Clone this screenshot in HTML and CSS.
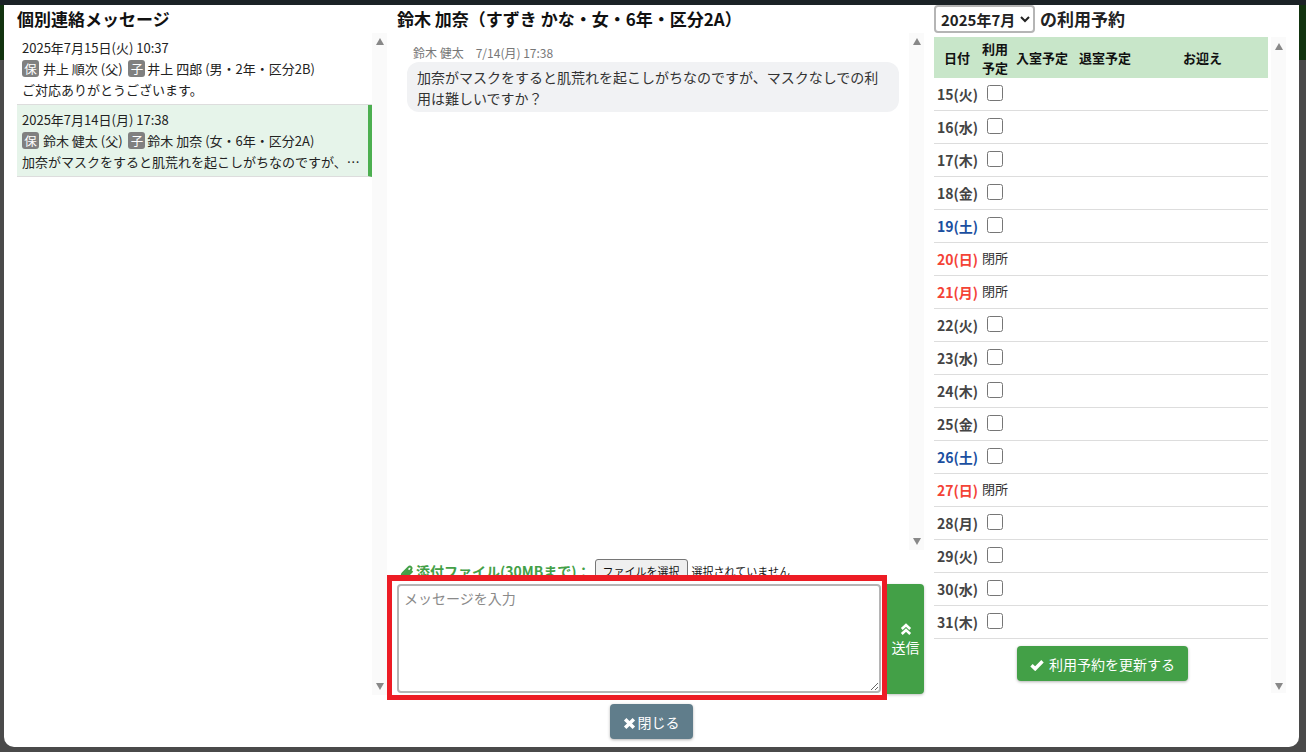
FILE: index.html
```html
<!DOCTYPE html>
<html lang="ja">
<head>
    <meta charset="UTF-8">
    <title>個別連絡メッセージ</title>
    <link rel="stylesheet" href="styles.css">
</head>
<body>
<div class="page-header"></div>

<div class="modal">
    <div class="modal-columns">
        <section class="col-list">
            <h2 class="col-title">個別連絡メッセージ</h2>
            <div class="scroll-pane list-pane">
                <div class="scroll-body">
                    <div class="thread">
                        <div>2025年7月15日(火) 10:37</div>
                        <div><span class="badge">保</span> 井上 順次 (父) <span class="badge badge-child">子</span> 井上 四郎 (男・2年・区分2B)</div>
                        <div class="thread-last">ご対応ありがとうございます。</div>
                    </div>
                    <div class="thread active">
                        <div>2025年7月14日(月) 17:38</div>
                        <div><span class="badge">保</span> 鈴木 健太 (父) <span class="badge badge-child">子</span> 鈴木 加奈 (女・6年・区分2A)</div>
                        <div class="thread-last">加奈がマスクをすると肌荒れを起こしがちなのですが、マスクなしでの利用は難しいですか？</div>
                    </div>
                </div>
                <div class="scrollbar"><i class="arrow-up"></i><i class="arrow-down"></i></div>
            </div>
        </section>

        <section class="col-chat">
            <h2 class="col-title chat-title">鈴木 加奈（すずき かな・女・6年・区分2A）</h2>
            <div class="scroll-pane chat-pane">
                <div class="scroll-body chat-body">
                    <div class="msg-meta">鈴木 健太<span class="msg-time">7/14(月) 17:38</span></div>
                    <div class="msg-bubble">加奈がマスクをすると肌荒れを起こしがちなのですが、マスクなしでの利用は難しいですか？</div>
                </div>
                <div class="scrollbar"><i class="arrow-up"></i><i class="arrow-down"></i></div>
            </div>
            <div class="attach-row">
                <span class="attach-label">
                    <svg class="icon-clip" viewBox="0 0 14 14"><path d="M12.500 6 6.800 11.700c-1.300 1.300-3.200 1.400-4.300.4s-1-2.900.3-4.200l5.500-5.500c.9-.9 2.100-1 2.800-.3s.6 1.900-.3 2.800L5.400 10.300c-.4.4-1 .5-1.300.2s-.2-.9.2-1.300l4.400-4.400" fill="none" stroke="currentColor" stroke-width="2"/></svg>添付ファイル(30MBまで)：
                </span>
                <button class="file-button" type="button">ファイルを選択</button>
                <span class="file-name">選択されていません</span>
            </div>
            <div class="compose-row">
                <div class="highlight">
                    <textarea class="message-input" placeholder="メッセージを入力"></textarea>
                </div>
                <button class="send-button" type="button">
                    <svg class="icon-send" viewBox="0 0 12 12"><path d="M1.800 6 6 2 10.200 6M1.800 11 6 7 10.200 11" fill="none" stroke="currentColor" stroke-width="2.600"/></svg>
                    送信
                </button>
            </div>
            <div class="close-row">
                <button class="close-button" type="button">
                    <svg class="icon-close" viewBox="0 0 12 12"><path d="M2 2 10 10M10 2 2 10" fill="none" stroke="currentColor" stroke-width="3.200"/></svg>閉じる
                </button>
            </div>
        </section>

        <section class="col-reserve">
            <div class="reserve-title">
                <select class="month-select"><option>2025年7月</option></select>
                <span class="reserve-label">の利用予約</span>
            </div>
            <div class="scroll-pane reserve-pane">
                <div class="scroll-body reserve-body">
                    <table class="reserve-table">
                        <thead>
                            <tr>
                                <th class="c-date">日付</th>
                                <th class="c-check">利用<br>予定</th>
                                <th class="c-in">入室予定</th>
                                <th class="c-out">退室予定</th>
                                <th class="c-pick">お迎え</th>
                            </tr>
                        </thead>
                        <tbody>
                            <tr><td class="day">15(火)</td><td><input type="checkbox"></td><td></td><td></td><td></td></tr>
                            <tr><td class="day">16(水)</td><td><input type="checkbox"></td><td></td><td></td><td></td></tr>
                            <tr><td class="day">17(木)</td><td><input type="checkbox"></td><td></td><td></td><td></td></tr>
                            <tr><td class="day">18(金)</td><td><input type="checkbox"></td><td></td><td></td><td></td></tr>
                            <tr><td class="day sat">19(土)</td><td><input type="checkbox"></td><td></td><td></td><td></td></tr>
                            <tr><td class="day sun">20(日)</td><td class="closed">閉所</td><td></td><td></td><td></td></tr>
                            <tr><td class="day sun">21(月)</td><td class="closed">閉所</td><td></td><td></td><td></td></tr>
                            <tr><td class="day">22(火)</td><td><input type="checkbox"></td><td></td><td></td><td></td></tr>
                            <tr><td class="day">23(水)</td><td><input type="checkbox"></td><td></td><td></td><td></td></tr>
                            <tr><td class="day">24(木)</td><td><input type="checkbox"></td><td></td><td></td><td></td></tr>
                            <tr><td class="day">25(金)</td><td><input type="checkbox"></td><td></td><td></td><td></td></tr>
                            <tr><td class="day sat">26(土)</td><td><input type="checkbox"></td><td></td><td></td><td></td></tr>
                            <tr><td class="day sun">27(日)</td><td class="closed">閉所</td><td></td><td></td><td></td></tr>
                            <tr><td class="day">28(月)</td><td><input type="checkbox"></td><td></td><td></td><td></td></tr>
                            <tr><td class="day">29(火)</td><td><input type="checkbox"></td><td></td><td></td><td></td></tr>
                            <tr><td class="day">30(水)</td><td><input type="checkbox"></td><td></td><td></td><td></td></tr>
                            <tr><td class="day">31(木)</td><td><input type="checkbox"></td><td></td><td></td><td></td></tr>
                        </tbody>
                    </table>
                    <div class="update-row">
                        <button class="update-button" type="button">
                            <svg class="icon-check" viewBox="0 0 14 12"><path d="M1.500 6.200 5.200 9.800 12.500 2.200" fill="none" stroke="currentColor" stroke-width="3.400"/></svg>利用予約を更新する
                        </button>
                    </div>
                </div>
                <div class="scrollbar"><i class="arrow-up"></i><i class="arrow-down"></i></div>
            </div>
        </section>
    </div>
</div>
</body>
</html>
```

FILE: styles.css
```css
* {
    margin: 0;
    padding: 0;
    box-sizing: border-box;
}

html, body {
    height: 100%;
}

body {
    font-family: "Noto Sans CJK JP", "Noto Sans", sans-serif;
    background: #4a4a4a;
    color: #222;
    overflow: hidden;
}

.page-header {
    height: 60px;
    background: #12330f;
    border-top: 5px solid #1b2226;
}

.modal {
    position: absolute;
    left: 4px;
    top: 5px;
    width: 1295px;
    height: 742px;
    background: white;
    border-radius: 0 0 10px 10px;
    padding-left: 13px;
}

.modal-columns {
    display: flex;
    height: 100%;
}

.col-title {
    font-size: 17px;
    font-weight: bold;
    color: #111;
    line-height: 28px;
}

/* scroll panes */
.scroll-pane {
    display: flex;
}

.scroll-body {
    flex: 1;
    min-width: 0;
}

.scrollbar {
    width: 15px;
    background: #fafafa;
    display: flex;
    flex-direction: column;
    justify-content: space-between;
    align-items: center;
    padding: 5px 0;
}

.arrow-up,
.arrow-down {
    width: 0;
    height: 0;
    border-left: 4.500px solid transparent;
    border-right: 4.500px solid transparent;
}

.arrow-up {
    border-bottom: 7px solid #888;
}

.arrow-down {
    border-top: 7px solid #888;
}

/* left column */
.col-list {
    width: 370px;
    flex-shrink: 0;
}

.list-pane {
    height: 662px;
}

.thread {
    height: 72px;
    padding: 4px 5px 0;
    font-size: 13px;
    line-height: 21px;
    color: #222;
    border-bottom: 1px solid #ddd;
}

.thread.active {
    background: #e6f4ea;
    border-right: 4px solid #4caf50;
}

.thread-last {
    white-space: nowrap;
    overflow: hidden;
    text-overflow: ellipsis;
}

.badge {
    display: inline-block;
    width: 17px;
    height: 17px;
    line-height: 17px;
    margin-right: 1px;
    text-align: center;
    background: #808080;
    color: white;
    font-size: 12.500px;
    border-radius: 3px;
}

.badge-child {
    margin-left: 3px;
    margin-right: -1px;
}

/* middle column */
.col-chat {
    width: 537px;
    flex-shrink: 0;
}

.chat-title {
    padding-left: 10px;
}

.chat-pane {
    height: 517px;
}

.chat-body {
    padding: 11px 10px 0 20px;
}

.msg-meta {
    font-size: 12px;
    line-height: 18px;
    color: #777;
    padding-left: 6px;
}

.msg-time {
    margin-left: 12px;
}

.msg-bubble {
    background: #f1f2f4;
    border-radius: 12px;
    padding: 5px 10px 3px;
    font-size: 14px;
    line-height: 21px;
    color: #333;
}

.attach-row {
    display: flex;
    align-items: flex-start;
    height: 24px;
    margin-top: 9px;
    padding-left: 13px;
    overflow: hidden;
}

.attach-label {
    font-size: 14px;
    font-weight: bold;
    color: #43a047;
    line-height: 24px;
    margin-right: 4px;
}

.icon-clip {
    width: 14px;
    height: 14px;
    margin-right: 2px;
    vertical-align: -2px;
}

.file-button {
    font-family: inherit;
    font-size: 11px;
    height: 24px;
    width: 93px;
    background: #efefef;
    border: 1px solid #767676;
    border-radius: 3px;
    color: #111;
}

.file-name {
    font-size: 11px;
    line-height: 24px;
    margin-left: 4px;
    color: #111;
}

.compose-row {
    display: flex;
    margin-top: -8px;
}

.highlight {
    width: 500px;
    height: 125px;
    border: 5px solid #ed1c24;
    border-top-width: 6px;
    background: white;
    padding: 3px 0 3px 5px;
    flex-shrink: 0;
    position: relative;
}

.message-input {
    display: block;
    width: 484px;
    height: 109px;
    border: 2px solid #b5b5b5;
    border-radius: 4px;
    padding: 1px 5px;
    font-family: inherit;
    font-size: 14px;
    line-height: 22px;
    outline: none;
}

.message-input::placeholder {
    color: #8a8a8a;
}

.send-button {
    width: 37px;
    height: 110px;
    margin-top: 9px;
    background: #43a047;
    color: white;
    border: none;
    border-radius: 0 4px 4px 0;
    font-family: inherit;
    font-size: 14px;
    line-height: 18px;
    box-shadow: 0 1px 3px rgba(0, 0, 0, 0.25);
}

.icon-send {
    display: block;
    width: 12px;
    height: 12px;
    margin: 0 auto 3px;
}

.close-row {
    display: flex;
    justify-content: center;
    padding-top: 4px;
    padding-right: 9px;
}

.close-button {
    width: 83px;
    height: 35px;
    background: #607d8b;
    color: white;
    border: none;
    border-radius: 4px;
    font-family: inherit;
    font-size: 14px;
    box-shadow: 0 1px 3px rgba(0, 0, 0, 0.3);
}

.icon-close {
    width: 13px;
    height: 13px;
    margin-right: 2px;
    vertical-align: -2px;
}

/* right column */
.col-reserve {
    width: 362px;
    flex-shrink: 0;
    padding-left: 10px;
}

.reserve-title {
    display: flex;
    align-items: center;
    height: 28px;
    margin-bottom: 4px;
    font-size: 17px;
    font-weight: bold;
    color: #222;
    gap: 5px;
}

.reserve-label {
    margin-top: -2px;
}

.month-select {
    font-family: inherit;
    font-size: 15px;
    font-weight: bold;
    height: 28px;
    width: 101px;
    padding-left: 1px;
    border: 2px solid #b5b5b5;
    border-radius: 4px;
    background: white;
    color: #222;
}

.reserve-pane {
    height: 656px;
}

.reserve-pane .scrollbar {
    padding: 6px 0 3px;
}

.reserve-body {
    padding-right: 3px;
}

.reserve-table {
    width: 334px;
    border-collapse: separate;
    border-spacing: 0;
    table-layout: fixed;
}

.reserve-table th {
    background: #c8e6c9;
    height: 41px;
    font-size: 13px;
    line-height: 19px;
    color: #111;
}

.c-date { width: 46px; }
.c-check { width: 32px; padding-right: 2px; }
.c-in { width: 63px; text-align: left; padding-left: 4px; }
.c-out { width: 105px; text-align: left; padding-left: 4px; }
.c-pick { text-align: left; padding-left: 3px; }

.reserve-table td {
    height: 33px;
    border-bottom: 1px solid #ddd;
    font-size: 13px;
}

.reserve-table input {
    display: block;
    width: 16px;
    height: 16px;
    margin: -3px 0 0 7px;
}

.day {
    font-size: 14px !important;
    font-weight: bold;
    color: #444;
    padding-left: 3px;
}

.sat {
    color: #1a4fa0;
}

.sun {
    color: #f44336;
}

.closed {
    padding: 0 0 3px 2px;
    color: #333;
}

.update-row {
    display: flex;
    justify-content: center;
    padding: 7px 0 0 3px;
}

.update-button {
    width: 171px;
    height: 35px;
    background: #43a047;
    color: white;
    border: none;
    border-radius: 4px;
    font-family: inherit;
    font-size: 14px;
    box-shadow: 0 1px 3px rgba(0, 0, 0, 0.3);
}

.icon-check {
    width: 14px;
    height: 12px;
    margin-right: 5px;
    vertical-align: -1px;
}
```
